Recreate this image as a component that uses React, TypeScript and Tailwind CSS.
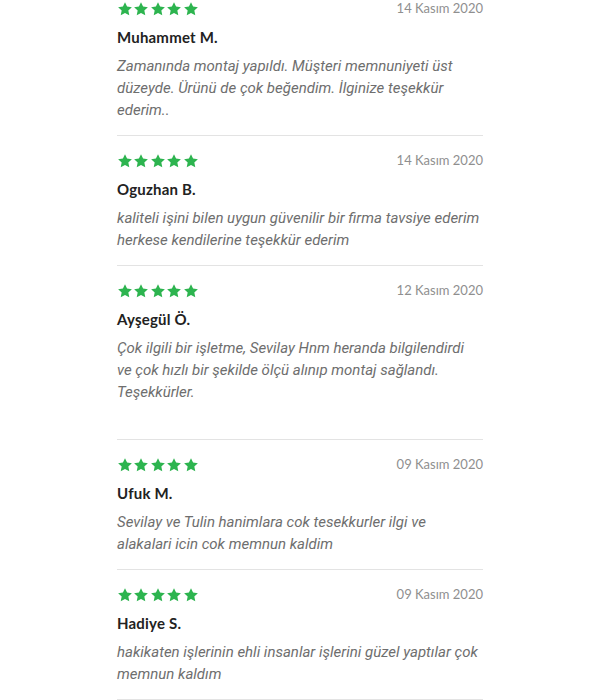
const reviews = [
  {
    name: "Muhammet M.",
    date: "14 Kasım 2020",
    text: ["Zamanında montaj yapıldı. Müşteri memnuniyeti üst", "düzeyde. Ürünü de çok beğendim. İlginize teşekkür", "ederim.."],
  },
  {
    name: "Oguzhan B.",
    date: "14 Kasım 2020",
    text: ["kaliteli işini bilen uygun güvenilir bir firma tavsiye ederim", "herkese kendilerine teşekkür ederim"],
  },
  {
    name: "Ayşegül Ö.",
    date: "12 Kasım 2020",
    text: ["Çok ilgili bir işletme, Sevilay Hnm heranda bilgilendirdi", "ve çok hızlı bir şekilde ölçü alınıp montaj sağlandı.", "Teşekkürler.", ""],
  },
  {
    name: "Ufuk M.",
    date: "09 Kasım 2020",
    text: ["Sevilay ve Tulin hanimlara cok tesekkurler ilgi ve", "alakalari icin cok memnun kaldim"],
  },
  {
    name: "Hadiye S.",
    date: "09 Kasım 2020",
    text: ["hakikaten işlerinin ehli insanlar işlerini güzel yaptılar çok", "memnun kaldım"],
  },
];

function Star() {
  return (
    <svg viewBox="0 0 24 24" className="w-[16px] h-[16px]" fill="#2db44f">
      <path d="M12 1.8l3.1 6.6 7.2.9-5.3 5 1.4 7.2L12 18l-6.4 3.5L7 14.3l-5.3-5 7.2-.9z" />
    </svg>
  );
}

export default function App() {
  return (
    <div className="w-[600px] h-[700px] overflow-hidden bg-white">
      <div className="w-[366px] mx-auto -mt-[16px]">
        {reviews.map((r, i) => (
          <div key={i} className="pt-[16px] pb-[14px] border-b border-[#e3e3e3]">
            <div className="flex items-center justify-between h-[18px]">
              <div className="flex gap-[0.5px] -ml-[0.5px]">
                <Star />
                <Star />
                <Star />
                <Star />
                <Star />
              </div>
              <span className="text-[13px] text-[#8f8f8f] font-['Lato',sans-serif]">{r.date}</span>
            </div>
            <div className="mt-[9px] h-[20px] leading-[20px] text-[15px] font-bold tracking-[0.2px] text-[#222] font-['Lato',sans-serif]">
              {r.name}
            </div>
            <div className="mt-[8px] text-[15px] leading-[22px] italic text-[#6e6e6e] font-['Roboto',sans-serif]">
              {r.text.map((l, j) => (
                <div key={j} className="h-[22px] whitespace-nowrap">{l}</div>
              ))}
            </div>
          </div>
        ))}
      </div>
    </div>
  );
}
